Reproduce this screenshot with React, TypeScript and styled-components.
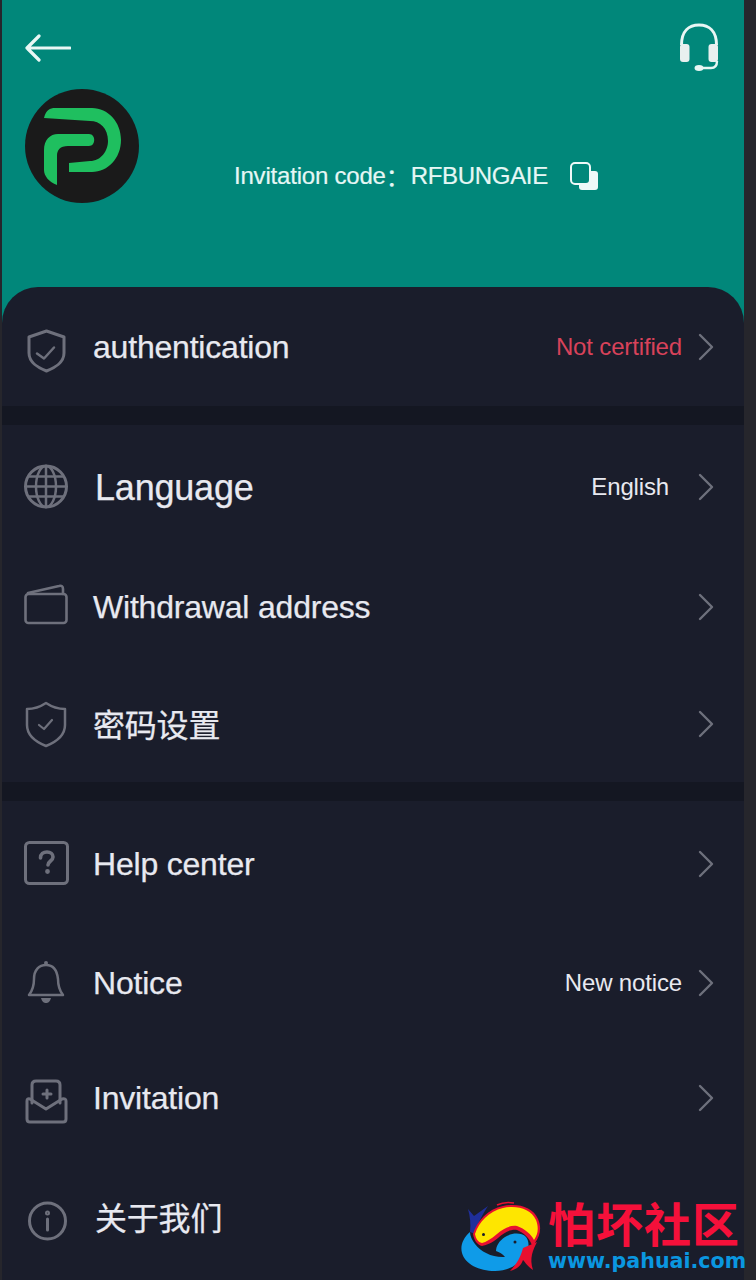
import styled, { createGlobalStyle } from "styled-components";
import type { ReactNode } from "react";

const GlobalStyle = createGlobalStyle`
  html, body {
    margin: 0;
    padding: 0;
    background: #26262c;
  }
  * {
    box-sizing: border-box;
  }
`;

const Page = styled.div`
  position: relative;
  width: 756px;
  height: 1280px;
  overflow: hidden;
  padding: 0 12px 0 2px;
  background: #26262c;
  font-family: "Liberation Sans", "Noto Sans CJK SC", sans-serif;
`;

const Sheet = styled.div`
  height: 100%;
  display: flex;
  flex-direction: column;
  background: #01877a;
`;

const Header = styled.header`
  height: 287px;
  flex-shrink: 0;
  padding: 23px 24px 0 23px;
`;

const TopBar = styled.div`
  height: 66px;
  display: flex;
  justify-content: space-between;
  align-items: flex-start;
`;

const BackIcon = styled.svg`
  width: 46px;
  height: 30px;
  margin-top: 10px;
  fill: none;
  stroke: #e9f7f5;
  stroke-width: 3.2;
  stroke-linecap: round;
  stroke-linejoin: round;
`;

const HeadsetIcon = styled.svg`
  width: 42px;
  height: 50px;
`;

const Profile = styled.div`
  display: flex;
  align-items: flex-end;
  gap: 95px;
`;

const Logo = styled.svg`
  width: 114px;
  height: 114px;
  flex-shrink: 0;
`;

const Invite = styled.div`
  display: flex;
  align-items: center;
  margin-bottom: 13px;
  font-size: 24px;
  line-height: 28px;
  letter-spacing: -0.2px;
  color: #e6f7f5;
  -webkit-text-stroke: 0.2px #e6f7f5;
`;

const InviteColon = styled.span`
  font-family: "Noto Sans CJK SC", sans-serif;
  width: 25px;
`;

const InviteCode = styled.span`
  letter-spacing: -0.33px;
`;

const CopyIcon = styled.svg`
  width: 28px;
  height: 28px;
  margin-left: 22px;
`;

const Panel = styled.main`
  flex: 1;
  display: flex;
  flex-direction: column;
  background: #1a1d2b;
  border-radius: 36px 36px 0 0;
  overflow: hidden;
`;

const Divider = styled.div`
  height: 19px;
  flex-shrink: 0;
  background: #141722;
`;

const Row = styled.div<{ $height: number }>`
  height: ${(p) => p.$height}px;
  flex-shrink: 0;
  display: flex;
  align-items: center;
  padding: 0 30px 0 22px;
`;

const IconSlot = styled.svg`
  width: 46px;
  height: 46px;
  flex-shrink: 0;
  overflow: visible;
  fill: none;
  stroke: #6e707c;
  stroke-width: 3;
  stroke-linecap: round;
  stroke-linejoin: round;
`;

const Label = styled.span<{ $size?: number; $indent?: number; $drop?: number }>`
  flex: 1;
  margin-left: ${(p) => 23 + (p.$indent ?? 0)}px;
  margin-top: ${(p) => p.$drop ?? 0}px;
  font-size: ${(p) => p.$size ?? 32}px;
  line-height: 40px;
  letter-spacing: -0.2px;
  color: #e8e9f0;
  -webkit-text-stroke: 0.25px #e8e9f0;
  white-space: nowrap;
`;

const Value = styled.span<{ $alert?: boolean; $gap?: number }>`
  margin-right: ${(p) => p.$gap ?? 16}px;
  font-size: 24px;
  line-height: 30px;
  letter-spacing: -0.15px;
  color: ${(p) => (p.$alert ? "#d8425a" : "#e8e9f0")};
  white-space: nowrap;
`;

const Chevron = styled.svg`
  width: 16px;
  height: 28px;
  flex-shrink: 0;
  fill: none;
  stroke: #6e707c;
  stroke-width: 2.4;
  stroke-linecap: round;
  stroke-linejoin: round;
`;

const Watermark = styled.div`
  position: absolute;
  left: 460px;
  bottom: 1px;
  width: 290px;
  height: 76px;
  display: flex;
  align-items: flex-start;
`;

const FishLogo = styled.svg`
  width: 95px;
  height: 88px;
  margin: -7px 0 0 -5px;
  flex-shrink: 0;
`;

const MarkText = styled.div`
  display: flex;
  flex-direction: column;
  margin-left: -2px;
`;

const MarkName = styled.div`
  font-family: "Liberation Serif", "Noto Sans CJK SC", serif;
  font-size: 47px;
  line-height: 47px;
  font-weight: 700;
  letter-spacing: 1px;
  color: #f5103a;
  white-space: nowrap;
`;

const MarkUrl = styled.div`
  font-family: "DejaVu Sans", sans-serif;
  font-size: 20.6px;
  line-height: 22px;
  font-weight: 700;
  color: #0a97e0;
  white-space: nowrap;
`;

type MenuRow = {
  height: number;
  label: string;
  icon: ReactNode;
  size?: number;
  indent?: number;
  drop?: number;
  value?: string;
  alert?: boolean;
  gap?: number;
};

const authRows: MenuRow[] = [
  {
    height: 119,
    label: "authentication",
    value: "Not certified",
    alert: true,
    icon: (
      <>
        <path d="M22.5 7 40 13v16c0 9-9 15-17.500 18C14 44 5 38 5 29V13Z" />
        <path d="m13 29.500 7 5 10-11" strokeWidth="2.500" />
      </>
    ),
  },
];

const accountRows: MenuRow[] = [
  {
    height: 124,
    label: "Language",
    size: 36,
    indent: 2,
    drop: 2,
    value: "English",
    gap: 29,
    icon: (
      <>
        <circle cx="22" cy="22.500" r="20.500" />
        <ellipse cx="22" cy="22.500" rx="10" ry="20.500" strokeWidth="2.500" />
        <path d="M22 2v41M2 22.500h40M5 12.500h34M5 32.500h34" strokeWidth="2.500" />
      </>
    ),
  },
  {
    height: 116,
    label: "Withdrawal address",
    icon: (
      <>
        <rect x="1.500" y="10" width="41" height="29" rx="3" strokeWidth="2.600" />
        <path d="M4 9 35 2q4-1 4 3v5" strokeWidth="2.600" />
      </>
    ),
  },
  {
    height: 117,
    label: "密码设置",
    drop: 4,
    icon: (
      <>
        <path d="M22 2c6 4 12 6 19 6v16c0 10-9 17-19 21C12 41 3 34 3 24V8c7 0 13-2 19-6Z" strokeWidth="2.500" />
        <path d="m15 24 5 4 8-9" strokeWidth="2.200" />
      </>
    ),
  },
];

const infoRows: MenuRow[] = [
  {
    height: 126,
    label: "Help center",
    icon: (
      <>
        <rect x="1.500" y="1.500" width="42" height="41" rx="4" />
        <path d="M16.500 17c0-4 3-6 6.500-6s6 2 6 5c0 4-5 4-5 8" strokeWidth="3.600" />
        <circle cx="23.500" cy="30.500" r="1.200" strokeWidth="2.400" fill="#6e707c" />
      </>
    ),
  },
  {
    height: 112,
    label: "Notice",
    value: "New notice",
    icon: (
      <>
        <path d="M5 35c4-5 5-9 5-16 0-9 5-14 12-14s11 5 12 14c0 7 1 11 5 16Z" strokeWidth="2.500" />
        <circle cx="22" cy="3" r="1" strokeWidth="2" />
        <path d="M17 38h10c-1 4-3 5-5 5s-4-1-5-5Z" fill="#6e707c" stroke="none" />
      </>
    ),
  },
  {
    height: 118,
    label: "Invitation",
    icon: (
      <>
        <path d="M8 28V10q0-4 4-4h20q4 0 4 4v18" />
        <path d="M3 26q0-3 3-2l16 10 16-10q4-1 4 2v18q0 3-3 3H6q-3 0-3-3Z" />
        <path d="M23 15v8M19 19h8" />
      </>
    ),
  },
  {
    height: 123,
    label: "关于我们",
    indent: 2,
    icon: (
      <>
        <circle cx="23.500" cy="25" r="18" />
        <path d="M23.500 23v11" />
        <circle cx="23.500" cy="17" r="1" />
      </>
    ),
  },
];

function MenuGroup({ rows }: { rows: MenuRow[] }) {
  return (
    <>
      {rows.map((row) => (
        <Row key={row.label} $height={row.height}>
          <IconSlot viewBox="0 0 46 46">{row.icon}</IconSlot>
          <Label $size={row.size} $indent={row.indent} $drop={row.drop}>
            {row.label}
          </Label>
          {row.value && (
            <Value $alert={row.alert} $gap={row.gap}>
              {row.value}
            </Value>
          )}
          {row.label !== "关于我们" && (
            <Chevron viewBox="0 0 16 28">
              <path d="m2 2 12 12L2 26" />
            </Chevron>
          )}
        </Row>
      ))}
    </>
  );
}

export default function App() {
  return (
    <Page>
      <GlobalStyle />
      <Sheet>
        <Header>
          <TopBar>
            <BackIcon viewBox="0 0 46 30">
              <path d="M45 15H2M14 3 2 15l12 12" />
            </BackIcon>
            <HeadsetIcon viewBox="0 0 42 50">
              <path d="M3.500 22C3.500 8 11 2 21 2s17.500 6 17.500 20" fill="none" stroke="#e8f6f4" strokeWidth="3" />
              <rect x="2" y="21" width="9.500" height="18" rx="3" fill="#e8f0ef" />
              <rect x="30.500" y="21" width="9.500" height="18" rx="3" fill="#e8f0ef" />
              <path d="M39 38c0 5-2 7-6 7H22" fill="none" stroke="#e8f6f4" strokeWidth="2.400" />
              <ellipse cx="21" cy="45" rx="4.500" ry="3" fill="#e8f6f4" />
            </HeadsetIcon>
          </TopBar>
          <Profile>
            <Logo viewBox="25 89 114 114">
              <circle cx="82" cy="146" r="57" fill="#1a1a1a" />
              <path
                d="M44 118c2-8 6-10 11-10h37c16 0 29 14 29 32s-13 32-29 32H69v-9l21-2c11 0 18-10 18-20 0-13-8-20-18-20Z"
                fill="#1fbf5f"
              />
              <path
                d="M44 150c0-10 6-16 14-16h31c7 0 7 12 0 12H68c-8 0-11 4-11 10v29c-8-3-13-9-13-15Z"
                fill="#1fbf5f"
              />
            </Logo>
            <Invite>
              <span>Invitation code</span>
              <InviteColon>：</InviteColon>
              <InviteCode>RFBUNGAIE</InviteCode>
              <CopyIcon viewBox="0 0 28 28">
                <rect x="9" y="9" width="19" height="19" rx="3" fill="#eef9f8" />
                <rect x="1" y="1" width="19" height="21" rx="4" fill="#01877a" stroke="#eef9f8" strokeWidth="2" />
              </CopyIcon>
            </Invite>
          </Profile>
        </Header>
        <Panel>
          <MenuGroup rows={authRows} />
          <Divider />
          <MenuGroup rows={accountRows} />
          <Divider />
          <MenuGroup rows={infoRows} />
        </Panel>
      </Sheet>
      <Watermark>
        <FishLogo viewBox="0 0 95 88">
          <path d="M13 13l6 7 14-10c-5 8-11 18-13 28l-5-2c1-8 0-16-2-23Z" fill="#1f2f9a" />
          <path
            d="M15 36C8 42 5 50 7 57c3 11 17 18 33 18 12 0 22-5 30-15 4-6 5-14 1-19-5-5-15-4-21 0-6 4-9 9-9 14 3 1 7 3 9 6-12 1-24-5-30-13-3-4-5-8-5-12Z"
            fill="#0f9be8"
          />
          <path d="M68 52l14-6c-4 8-8 16-4 28-6-4-8-8-10-10-2 6-6 9-13 11 7-7 11-15 13-23Z" fill="#e81030" />
          <path d="M42 9c6-3 12-3 17-2" fill="none" stroke="#e81030" strokeWidth="1.500" />
          <path
            d="M18 38c4-13 15-25 30-28 15-3 30 1 35 13 4 9 2 17-3 24-1 3-3 3-4 0-2-5-7-10-14-13-7-1-13 3-19 8-6 5-11 7-16 8-5-1-8-6-9-12Z"
            fill="#e81030"
          />
          <path
            d="M20 38c4-12 14-23 28-26 14-3 28 1 33 12 3 8 2 14-2 20-3-6-9-11-17-14-8-1-14 3-20 8-6 5-11 8-15 9-4-1-6-4-7-9Z"
            fill="#fee600"
          />
          <circle cx="28.500" cy="38.500" r="1.500" fill="#1a1d2b" />
          <circle cx="60" cy="46" r="1.500" fill="#1a1d2b" />
        </FishLogo>
        <MarkText>
          <MarkName>怕坏社区</MarkName>
          <MarkUrl>www.pahuai.com</MarkUrl>
        </MarkText>
      </Watermark>
    </Page>
  );
}
